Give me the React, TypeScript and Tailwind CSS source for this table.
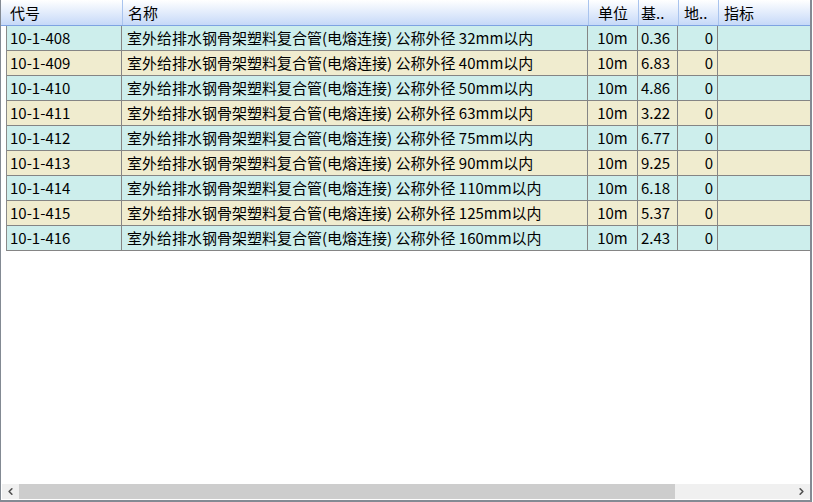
import { ChevronLeft, ChevronRight } from 'lucide-react';

type Row = {
  code: string;
  name: string;
  unit: string;
  base: string;
  land: string;
};

const rows: Row[] = [
  { code: '10-1-408', name: '室外给排水钢骨架塑料复合管(电熔连接) 公称外径 32mm以内', unit: '10m', base: '0.36', land: '0' },
  { code: '10-1-409', name: '室外给排水钢骨架塑料复合管(电熔连接) 公称外径 40mm以内', unit: '10m', base: '6.83', land: '0' },
  { code: '10-1-410', name: '室外给排水钢骨架塑料复合管(电熔连接) 公称外径 50mm以内', unit: '10m', base: '4.86', land: '0' },
  { code: '10-1-411', name: '室外给排水钢骨架塑料复合管(电熔连接) 公称外径 63mm以内', unit: '10m', base: '3.22', land: '0' },
  { code: '10-1-412', name: '室外给排水钢骨架塑料复合管(电熔连接) 公称外径 75mm以内', unit: '10m', base: '6.77', land: '0' },
  { code: '10-1-413', name: '室外给排水钢骨架塑料复合管(电熔连接) 公称外径 90mm以内', unit: '10m', base: '9.25', land: '0' },
  { code: '10-1-414', name: '室外给排水钢骨架塑料复合管(电熔连接) 公称外径 110mm以内', unit: '10m', base: '6.18', land: '0' },
  { code: '10-1-415', name: '室外给排水钢骨架塑料复合管(电熔连接) 公称外径 125mm以内', unit: '10m', base: '5.37', land: '0' },
  { code: '10-1-416', name: '室外给排水钢骨架塑料复合管(电熔连接) 公称外径 160mm以内', unit: '10m', base: '2.43', land: '0' },
];

const cols = 'grid grid-cols-[115px_466px_50px_40px_40px_1fr]';

export default function App() {
  return (
    <div
      className="w-[812px] h-[502px] flex flex-col bg-white border-l border-r-2 border-b-2 border-[#838a93] text-[15px] text-black overflow-hidden"
      style={{ fontFamily: '"SimSun", "Noto Sans CJK SC", sans-serif' }}
    >
      {/* header */}
      <div className="grid grid-cols-[122px_466px_50px_40px_40px_1fr] h-[26px] border-b border-[#7ea3e2] bg-gradient-to-b from-white to-[#c6d9f8] leading-[25px]">
        <div className="pl-[9px] border-r border-[#a9c4ee]">代号</div>
        <div className="pl-[5px] border-r border-[#a9c4ee]">名称</div>
        <div className="pl-[9px] border-r border-[#a9c4ee]">单位</div>
        <div className="pl-[2px] border-r border-[#a9c4ee]">基..</div>
        <div className="pl-[5px] border-r border-[#a9c4ee]">地..</div>
        <div className="pl-[5px]">指标</div>
      </div>

      {/* rows */}
      <div className="flex-1 pl-[5px]">
        <div className="border-l border-[#8a8a8a]">
          {rows.map((r, i) => (
            <div
              key={r.code}
              className={`${cols} h-[25px] leading-[24px] border-b border-[#858585] ${
                i % 2 === 0 ? 'bg-[#cdeeec]' : 'bg-[#f0eccf]'
              }`}
            >
              <div className="pl-[3px] border-r border-[#858585] whitespace-nowrap">{r.code}</div>
              <div className="pl-[5px] border-r border-[#858585] whitespace-nowrap overflow-hidden">{r.name}</div>
              <div className="text-center border-r border-[#858585]">{r.unit}</div>
              <div className="pl-[3px] border-r border-[#858585]">{r.base}</div>
              <div className="pr-[4px] text-right border-r border-[#858585]">{r.land}</div>
              <div />
            </div>
          ))}
        </div>
      </div>

      {/* horizontal scrollbar */}
      <div className="h-[15px] mb-[1px] ml-[1px] flex bg-[#f0f0f0]">
        <div className="w-[17px] flex items-center justify-center text-[#505050]">
          <ChevronLeft size={11} strokeWidth={3.5} />
        </div>
        <div className="w-[656px] bg-[#cdcdcd]" />
        <div className="flex-1" />
        <div className="w-[17px] flex items-center justify-center text-[#505050]">
          <ChevronRight size={11} strokeWidth={3.5} />
        </div>
      </div>
    </div>
  );
}
